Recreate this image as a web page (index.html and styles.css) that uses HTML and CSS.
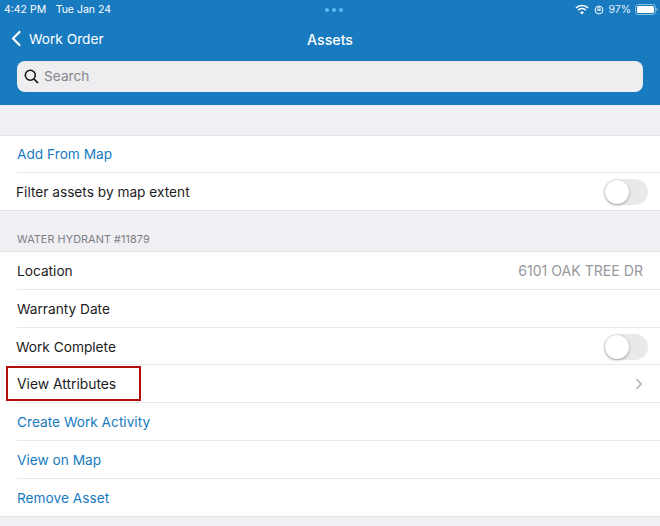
FILE: index.html
```html
<!DOCTYPE html>
<html lang="en">
<head>
<meta charset="utf-8">
<title>Assets</title>
<link rel="stylesheet" href="styles.css">
</head>
<body>
<header class="header">
  <div class="status">
    <div class="status-left"><span>4:42 PM</span><span>Tue Jan 24</span></div>
    <div class="dots"><i></i><i></i><i></i></div>
    <div class="status-right">
      <svg class="wifi" width="14" height="11" viewBox="0 0 14 11"><path d="M1 3.9C4.4.7 9.6.7 13 3.9" fill="none" stroke="#fff" stroke-width="1.6"/><path d="M3.2 6.1c2.2-2 5.4-2 7.6 0" fill="none" stroke="#fff" stroke-width="1.6"/><path d="M7 10.4 4.9 8.2c1.2-1 3-1 4.2 0z" fill="#fff"/></svg>
      <svg class="lock" width="10" height="10" viewBox="0 0 10 10"><circle cx="5" cy="5" r="3.9" fill="none" stroke="#fff" stroke-width="1"/><path d="M3.3 5.8h3.4V4.3H3.3z" fill="#fff"/><path d="M3.9 4.3V3.4a1.1 1.1 0 0 1 2.2 0v.9" fill="none" stroke="#fff" stroke-width=".8"/></svg>
      <span>97%</span>
      <svg class="battery" width="23" height="11" viewBox="0 0 23 11"><rect x=".5" y=".5" width="20" height="10" rx="3" fill="none" stroke="#8fc0e2"/><rect x="2" y="2" width="17" height="7" rx="1.6" fill="#fff"/><path d="M21.5 3.7c.8.2 1.2 1 1.2 1.8s-.4 1.6-1.2 1.8z" fill="#8fc0e2"/></svg>
    </div>
  </div>
  <nav class="nav">
    <a class="back">
      <svg width="11" height="17" viewBox="0 0 11 17"><path d="M9.2 1.2 2 8.5l7.2 7.3" fill="none" stroke="#fff" stroke-width="2.1"/></svg>
      <span>Work Order</span>
    </a>
    <div class="title">Assets</div>
  </nav>
  <div class="search">
    <svg width="15" height="15" viewBox="0 0 15 15"><circle cx="6.3" cy="6.3" r="5" fill="none" stroke="#111" stroke-width="1.5"/><path d="m10 10 4 4" stroke="#111" stroke-width="1.7"/></svg>
    <span>Search</span>
  </div>
</header>

<main>
  <div class="spacer"></div>
  <section class="group">
    <div class="row short link">Add From Map</div>
    <div class="row short"><span class="outdent">Filter assets by map extent</span><span class="toggle"></span></div>
  </section>
  <h2 class="section-title">WATER HYDRANT #11879</h2>
  <section class="group">
    <div class="row">Location<span class="value">6101 OAK TREE DR</span></div>
    <div class="row">Warranty Date</div>
    <div class="row short nudge"><span class="outdent">Work Complete</span><span class="toggle"></span></div>
    <div class="row"><span class="label-wide">View Attributes</span>
      <svg class="chevron" width="8" height="12" viewBox="0 0 8 12"><path d="m1.2 1 5 5-5 5" fill="none" stroke="#b3b3b8" stroke-width="1.6"/></svg>
      <span class="highlight"></span>
    </div>
    <div class="row link">Create Work Activity</div>
    <div class="row link">View on Map</div>
    <div class="row short link">Remove Asset</div>
  </section>
</main>
</body>
</html>
```

FILE: styles.css
```css
* { box-sizing: border-box; }
html, body { margin: 0; height: 100%; }
body {
  background: #efeff4;
  font-family: Inter, "Liberation Sans", sans-serif;
  font-size: 13.7px;
  color: #1c1c1e;
  overflow: hidden;
}
.header {
  background: #187bc0;
  height: 105px;
  color: #fff;
  padding: 0 17px;
}
.status {
  height: 18px;
  margin: 0 -13px;
  padding-top: 1px;
  display: flex;
  align-items: center;
  justify-content: space-between;
  font-size: 10.5px;
  position: relative;
}
.status-left { display: flex; gap: 9.5px; }
.status-right { display: flex; align-items: center; gap: 4px; margin-right: -2px; color: #e3f0f9; }
.wifi { margin-right: 1px; }
.dots {
  position: absolute;
  left: 321px;
  top: 8px;
  display: flex;
  gap: 3px;
}
.dots i { width: 4px; height: 4px; border-radius: 50%; background: #5ebcf5; }
.nav {
  height: 43px;
  display: flex;
  align-items: center;
  justify-content: center;
  position: relative;
}
.back {
  position: absolute;
  left: -6px;
  top: 12px;
  display: flex;
  align-items: center;
  gap: 7px;
}
.title { font-size: 14.2px; font-weight: 500; }
.search {
  height: 31px;
  background: #eeeef0;
  border-radius: 8px;
  display: flex;
  align-items: center;
  gap: 5px;
  padding: 0 0 1px 7px;
  color: #86868b;
}
.spacer { height: 30px; }
.group { background: #fff; border-top: 1px solid #e2e2e6; border-bottom: 1px solid #e2e2e6; }
.row {
  height: 38px;
  margin-left: 17px;
  padding-right: 12px;
  display: flex;
  align-items: center;
  justify-content: space-between;
  border-bottom: 1px solid #e9e9ec;
  position: relative;
}
.row.short { height: 37px; }
.row.nudge { padding-top: 1px; }
.row:last-child { border-bottom: 0; }
.outdent { margin-left: -1px; }
.label-wide { font-size: 13.85px; }
.link { color: #187bc0; }
.value { color: #98989d; font-size: 14.1px; margin-right: 5px; }
.section-title {
  margin: 0;
  height: 40px;
  padding: 22px 17px 0;
  font-size: 10.8px;
  font-weight: 400;
  letter-spacing: .1px;
  color: #7d7d82;
}
.toggle {
  width: 44px;
  height: 26px;
  border-radius: 13px;
  background: #e9e9ea;
  position: relative;
}
.toggle::after {
  content: "";
  position: absolute;
  left: 1px;
  top: 1px;
  width: 24px;
  height: 24px;
  border-radius: 50%;
  background: #fff;
  box-shadow: 0 1px 3px rgba(0,0,0,.35);
}
.chevron { margin-right: 5px; }
.highlight {
  position: absolute;
  left: -11px;
  top: 1px;
  width: 135px;
  height: 35px;
  border: 2px solid #b80d0d;
}
```
